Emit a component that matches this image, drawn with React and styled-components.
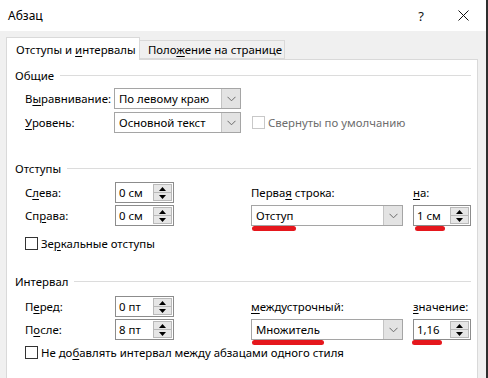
import React from 'react'
import styled, { createGlobalStyle } from 'styled-components'

const GlobalStyle = createGlobalStyle`
  html, body {
    margin: 0;
    padding: 0;
    background: #f0f0f0;
  }
  body {
    font-family: "Segoe UI", "Noto Sans", "Liberation Sans", sans-serif;
    font-size: 11.4px;
    color: #000;
  }
`

const Window = styled.div`
  width: 486px;
  height: 378px;
  overflow: hidden;
  display: flex;
  flex-direction: column;
  background: #f0f0f0;
  border-right: 2px solid #2e2e2e;
`

const TitleBar = styled.div`
  height: 31px;
  flex: none;
  display: flex;
  align-items: center;
  padding-left: 8px;
  background: #fff;
  font-size: 12px;
`

const Title = styled.div`
  flex: 1;
`

const TitleButton = styled.div`
  width: ${p => p.$w || 46}px;
  height: 31px;
  display: flex;
  align-items: center;
  justify-content: center;
  font-size: 13px;
  color: #111;
`

const TabStrip = styled.div`
  height: 28px;
  flex: none;
  display: flex;
  align-items: flex-end;
  padding-left: 6px;
  position: relative;
  z-index: 1;
`

const Tab = styled.div`
  box-sizing: border-box;
  width: ${p => p.$w}px;
  height: ${p => (p.$active ? '23px' : '19px')};
  margin-bottom: ${p => (p.$active ? '-1px' : '0')};
  padding-left: ${p => (p.$active ? '9px' : '8px')};
  display: flex;
  align-items: center;
  white-space: nowrap;
  background: ${p => (p.$active ? '#fff' : '#f0f0f0')};
  border: 1px solid #d9d9d9;
  border-bottom: ${p => (p.$active ? 'none' : '1px solid #d9d9d9')};
  border-left: ${p => (p.$active ? '1px solid #d9d9d9' : 'none')};
`

const Panel = styled.div`
  flex: 1;
  margin-left: 6px;
  width: 472px;
  box-sizing: border-box;
  border: 1px solid #d9d9d9;
  border-bottom: none;
  background: #fff;
  padding: 7px 6px 0 8px;
`

const Group = styled.div`
  margin-top: ${p => p.$top || 0}px;
`

const GroupHeader = styled.div`
  height: 16px;
  display: flex;
  align-items: center;
  gap: 6px;

  &::after {
    content: '';
    flex: 1;
    height: 1px;
    background: #dcdcdc;
  }
`

const GeneralGrid = styled.div`
  margin-top: 5px;
  margin-left: 10px;
  display: grid;
  grid-template-columns: 89px 127px auto;
  row-gap: 3px;
  align-items: center;
`

const FieldGrid = styled.div`
  margin-top: ${p => p.$top}px;
  margin-left: 10px;
  display: grid;
  grid-template-columns: 90px 59px 77px 152px 10px 58px;
  grid-template-rows: 21px 21px;
  row-gap: 2px;
  align-items: center;

  & > :nth-child(4n + 3) {
    grid-column: 4;
  }
  & > :nth-child(4n + 4) {
    grid-column: 6;
  }
`

const Label = styled.div`
  white-space: nowrap;
`

const U = styled.span`
  text-decoration: underline;
  text-underline-offset: 2px;
`

const ControlBox = styled.div`
  position: relative;
  box-sizing: border-box;
  width: ${p => p.$w}px;
  height: 21px;
  display: flex;
  align-items: stretch;
  border: 1px solid ${p => p.$border || '#a5a5a5'};
  background: #fff;
`

const ControlText = styled.div`
  flex: 1;
  display: flex;
  align-items: center;
  padding-left: ${p => p.$pad || 4}px;
  white-space: nowrap;
`

const DropButton = styled.div`
  width: 18px;
  display: flex;
  align-items: center;
  justify-content: center;
  background: #e3e3e3;
  border-left: 1px solid #c4c4c4;
`

const SpinButtons = styled.div`
  width: 17px;
  margin: 1px 1px 1px 0;
  display: flex;
  flex-direction: column;
  border: 1px solid #b9b9b9;
  background: #e6e6e6;
`

const SpinHalf = styled.div`
  flex: 1;
  display: flex;
  align-items: center;
  justify-content: center;
  border-top: ${p => (p.$down ? '1px solid #b9b9b9' : 'none')};
`

const Mark = styled.div`
  position: absolute;
  left: ${p => p.$left || 0}px;
  bottom: -6px;
  width: ${p => p.$w}px;
  height: 5px;
  border-radius: 3px;
  background: #e5171d;
`

const CheckRow = styled.div`
  display: flex;
  align-items: center;
  gap: 3px;
  margin-top: ${p => p.$top || 0}px;
  margin-left: ${p => p.$left || 0}px;
  color: ${p => (p.$disabled ? '#6d6d6d' : '#000')};
  white-space: nowrap;
`

const Box = styled.span`
  box-sizing: border-box;
  width: 13px;
  height: 13px;
  flex: none;
  border: 1px solid ${p => (p.$disabled ? '#c8c8c8' : '#333')};
  background: #fff;
`

const Chevron = () => (
  <svg width="9" height="6" viewBox="0 0 9 6">
    <path d="M0.5 0.8 L4.5 4.8 L8.5 0.8" fill="none" stroke="#6a6a6a" strokeWidth="1" />
  </svg>
)

const Arrow = ({ down }) => (
  <svg width="7" height="4" viewBox="0 0 7 4">
    <path d={down ? 'M0 0 H7 L3.5 4 Z' : 'M0 4 H7 L3.5 0 Z'} fill="#000" />
  </svg>
)

const CloseIcon = () => (
  <svg width="11" height="11" viewBox="0 0 11 11">
    <path d="M0.5 0.5 L10.5 10.5 M10.5 0.5 L0.5 10.5" stroke="#111" strokeWidth="1" />
  </svg>
)

const Select = ({ width, value, mark }) => (
  <ControlBox $w={width}>
    <ControlText>{value}</ControlText>
    <DropButton>
      <Chevron />
    </DropButton>
    {mark && <Mark $w={mark} $left={0} />}
  </ControlBox>
)

const Spin = ({ width, value, mark, markLeft }) => (
  <ControlBox $w={width} $border="#8c8c8c">
    <ControlText $pad={3}>{value}</ControlText>
    <SpinButtons>
      <SpinHalf>
        <Arrow />
      </SpinHalf>
      <SpinHalf $down>
        <Arrow down />
      </SpinHalf>
    </SpinButtons>
    {mark && <Mark $w={mark} $left={markLeft} />}
  </ControlBox>
)

const App = () => {
  return (
    <>
      <GlobalStyle />
      <Window>
        <TitleBar>
          <Title>Абзац</Title>
          <TitleButton $w={38}>?</TitleButton>
          <TitleButton>
            <CloseIcon />
          </TitleButton>
        </TitleBar>

        <TabStrip>
          <Tab $active $w={134}>
            <span>
              Отступы и <U>и</U>нтервалы
            </span>
          </Tab>
          <Tab $w={145}>
            <span>
              Поло<U>ж</U>ение на странице
            </span>
          </Tab>
        </TabStrip>

        <Panel>
          <Group>
            <GroupHeader>Общие</GroupHeader>
            <GeneralGrid>
              <Label>
                В<U>ы</U>равнивание:
              </Label>
              <Select width={127} value="По левому краю" />
              <span />
              <Label>
                <U>У</U>ровень:
              </Label>
              <Select width={127} value="Основной текст" />
              <CheckRow $disabled $left={11}>
                <Box $disabled />
                <span>Свернуты по умолчанию</span>
              </CheckRow>
            </GeneralGrid>
          </Group>

          <Group $top={27}>
            <GroupHeader>Отступы</GroupHeader>
            <FieldGrid $top={6}>
              <Label>
                С<U>л</U>ева:
              </Label>
              <Spin width={59} value="0 см" />
              <Label>
                Перва<U>я</U> строка:
              </Label>
              <Label>
                <U>н</U>а:
              </Label>
              <Label>
                Сп<U>р</U>ава:
              </Label>
              <Spin width={59} value="0 см" />
              <Select width={152} value="Отступ" mark={44} />
              <Spin width={58} value="1 см" mark={30} markLeft={1} />
            </FieldGrid>
            <CheckRow $top={10} $left={10}>
              <Box />
              <span>
                Зе<U>р</U>кальные отступы
              </span>
            </CheckRow>
          </Group>

          <Group $top={22}>
            <GroupHeader>Интервал</GroupHeader>
            <FieldGrid $top={7}>
              <Label>
                П<U>е</U>ред:
              </Label>
              <Spin width={59} value="0 пт" />
              <Label>
                <U>м</U>еждустрочный:
              </Label>
              <Label>
                <U>з</U>начение:
              </Label>
              <Label>
                П<U>о</U>сле:
              </Label>
              <Spin width={59} value="8 пт" />
              <Select width={152} value="Множитель" mark={72} />
              <Spin width={58} value="1,16" mark={30} markLeft={-2} />
            </FieldGrid>
            <CheckRow $top={5} $left={10}>
              <Box />
              <span>
                Не до<U>б</U>авлять интервал между абзацами одного стиля
              </span>
            </CheckRow>
          </Group>
        </Panel>
      </Window>
    </>
  )
}

export default App
